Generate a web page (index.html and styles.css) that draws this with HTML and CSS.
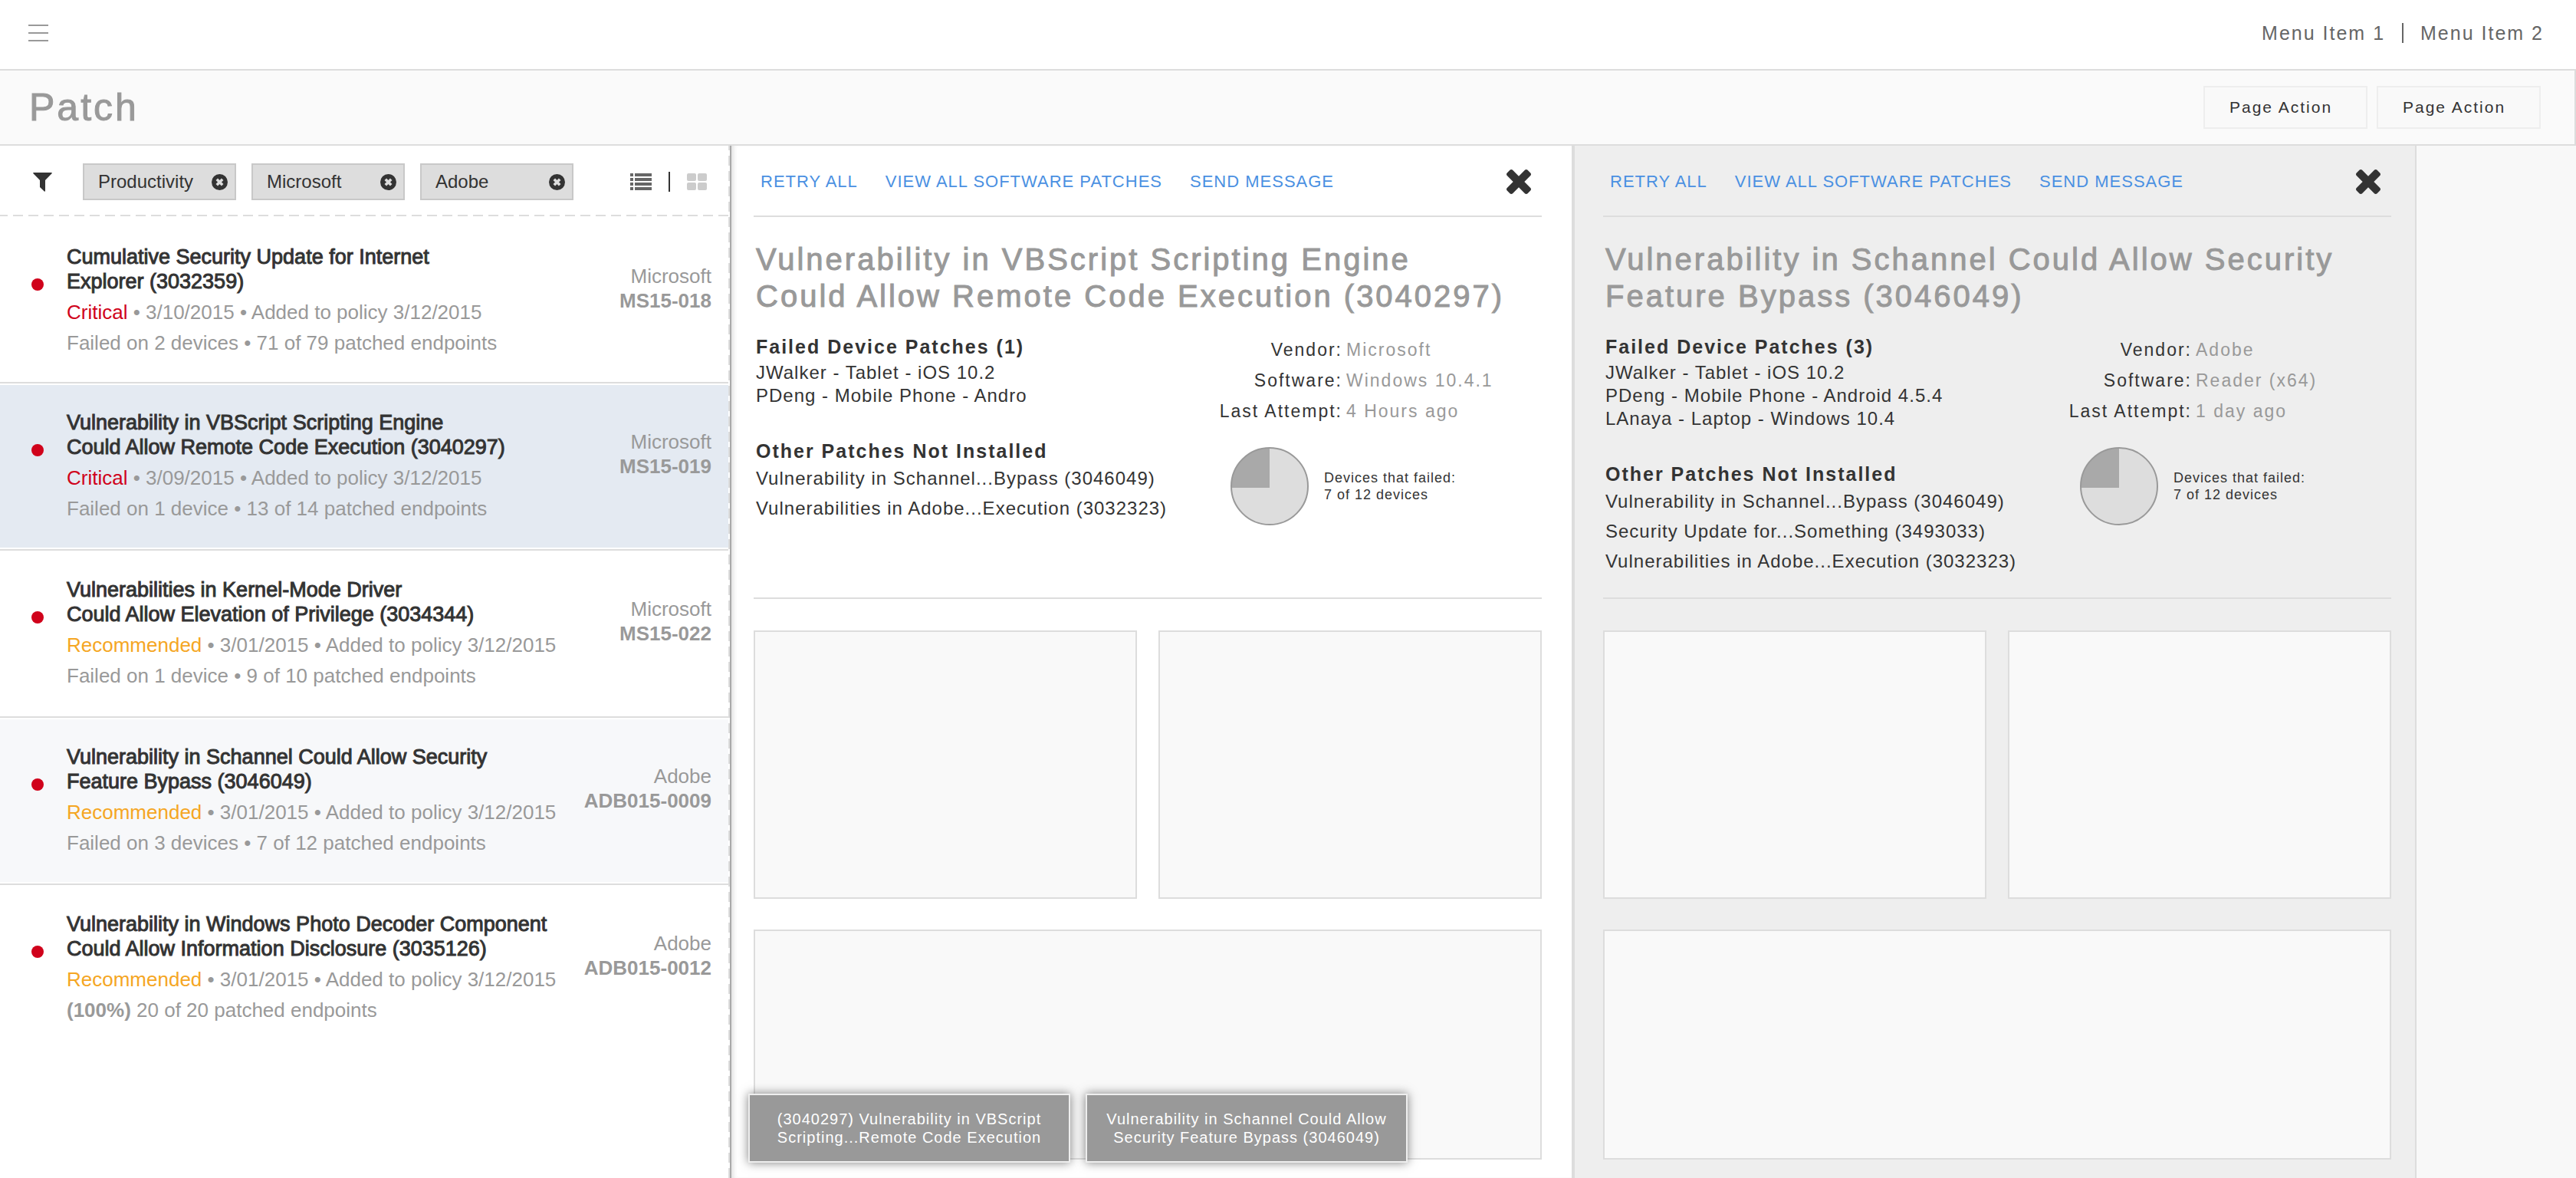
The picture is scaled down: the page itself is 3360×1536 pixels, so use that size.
FILE: index.html
```html
<!DOCTYPE html>
<html lang="en">
<head>
<meta charset="utf-8">
<meta name="viewport" content="width=device-width, initial-scale=1">
<title>Patch</title>
<link rel="stylesheet" href="styles.css">
</head>
<body>
<svg class="sprite" aria-hidden="true">
  <symbol id="icon-close" viewBox="110 366 1188 1188">
    <path d="M1298 1322q0 40-28 68l-136 136q-28 28-68 28t-68-28l-294-294-294 294q-28 28-68 28t-68-28l-136-136q-28-28-28-68t28-68l294-294-294-294q-28-28-28-68t28-68l136-136q28-28 68-28t68 28l294 294 294-294q28-28 68-28t68 28l136 136q28 28 28 68t-28 68l-294 294 294 294q28 28 28 68z"/>
  </symbol>
  <symbol id="icon-remove" viewBox="0 0 21 21">
    <circle cx="10.500" cy="10.500" r="10.500"/>
    <path d="M6.800 6.800l7.400 7.400M14.200 6.800l-7.400 7.400" fill="none" stroke="#ddd" stroke-width="3.600"/>
  </symbol>
  <symbol id="icon-pie" viewBox="0 0 102 102">
    <circle cx="51" cy="51" r="50" fill="#ddd"/>
    <path d="M51 53H1A50 50 0 0 1 51 1z" fill="#a9a9a9"/>
    <circle cx="51" cy="51" r="50" fill="none" stroke="#999" stroke-width="2"/>
  </symbol>
</svg>

<header class="topbar">
  <button class="icon-button" type="button" aria-label="Open menu">
    <svg width="26" height="22" viewBox="0 0 26 22" fill="#999"><path d="M0 0h26v2H0zM0 10h26v2H0zM0 20h26v2H0z"/></svg>
  </button>
  <nav class="menu">
    <a href="#">Menu Item 1</a>
    <span class="menu-divider"></span>
    <a href="#">Menu Item 2</a>
  </nav>
</header>

<div class="titlebar">
  <h1>Patch</h1>
  <div class="page-actions">
    <button class="page-action" type="button">Page Action</button>
    <button class="page-action" type="button">Page Action</button>
  </div>
</div>

<main class="workspace">
  <aside class="sidebar">
    <div class="filters">
      <svg class="funnel" width="25" height="25" viewBox="0 0 25 25" fill="#333"><path d="M1 0h23q1 0 .8 1L16 10v14q0 1-1 .8L9 19v-9L.2 1Q0 0 1 0z"/></svg>
      <div class="chips">
        <button class="chip" type="button">Productivity<svg width="21" height="21"><use href="#icon-remove"/></svg></button>
        <button class="chip" type="button">Microsoft<svg width="21" height="21"><use href="#icon-remove"/></svg></button>
        <button class="chip" type="button">Adobe<svg width="21" height="21"><use href="#icon-remove"/></svg></button>
      </div>
      <div class="views">
        <button class="icon-button" type="button" aria-label="List view">
          <svg width="28" height="22" viewBox="0 0 28 22" fill="#666"><path d="M0 0h4v4H0zM6 0h22v4H6zM0 6h4v4H0zM6 6h22v4H6zM0 12h4v4H0zM6 12h22v4H6zM0 18h4v4H0zM6 18h22v4H6z"/></svg>
        </button>
        <span class="views-divider"></span>
        <button class="icon-button" type="button" aria-label="Grid view">
          <svg width="26" height="22" viewBox="0 0 26 22" fill="#ccc"><rect width="12" height="10" rx="2"/><rect x="14" width="12" height="10" rx="2"/><rect y="12" width="12" height="10" rx="2"/><rect x="14" y="12" width="12" height="10" rx="2"/></svg>
        </button>
      </div>
    </div>
    <ul class="patches">
      <li>
        <article class="patch">
          <span class="dot"></span>
          <div class="patch-body">
            <h2>Cumulative Security Update for Internet<br>Explorer (3032359)</h2>
            <p><span class="critical">Critical</span> • 3/10/2015 • Added to policy 3/12/2015</p>
            <p>Failed on 2 devices • 71 of 79 patched endpoints</p>
          </div>
          <p class="vendor">Microsoft<br><b>MS15-018</b></p>
        </article>
      </li>
      <li>
        <article class="patch selected">
          <span class="dot"></span>
          <div class="patch-body">
            <h2>Vulnerability in VBScript Scripting Engine<br>Could Allow Remote Code Execution (3040297)</h2>
            <p><span class="critical">Critical</span> • 3/09/2015 • Added to policy 3/12/2015</p>
            <p>Failed on 1 device • 13 of 14 patched endpoints</p>
          </div>
          <p class="vendor">Microsoft<br><b>MS15-019</b></p>
        </article>
      </li>
      <li>
        <article class="patch">
          <span class="dot"></span>
          <div class="patch-body">
            <h2>Vulnerabilities in Kernel-Mode Driver<br>Could Allow Elevation of Privilege (3034344)</h2>
            <p><span class="recommended">Recommended</span> • 3/01/2015 • Added to policy 3/12/2015</p>
            <p>Failed on 1 device • 9 of 10 patched endpoints</p>
          </div>
          <p class="vendor">Microsoft<br><b>MS15-022</b></p>
        </article>
      </li>
      <li>
        <article class="patch opened">
          <span class="dot"></span>
          <div class="patch-body">
            <h2>Vulnerability in Schannel Could Allow Security<br>Feature Bypass (3046049)</h2>
            <p><span class="recommended">Recommended</span> • 3/01/2015 • Added to policy 3/12/2015</p>
            <p>Failed on 3 devices • 7 of 12 patched endpoints</p>
          </div>
          <p class="vendor">Adobe<br><b>ADB015-0009</b></p>
        </article>
      </li>
      <li>
        <article class="patch">
          <span class="dot"></span>
          <div class="patch-body">
            <h2>Vulnerability in Windows Photo Decoder Component<br>Could Allow Information Disclosure (3035126)</h2>
            <p><span class="recommended">Recommended</span> • 3/01/2015 • Added to policy 3/12/2015</p>
            <p><b>(100%)</b> 20 of 20 patched endpoints</p>
          </div>
          <p class="vendor">Adobe<br><b>ADB015-0012</b></p>
        </article>
      </li>
    </ul>
  </aside>

  <section class="panel panel-front">
    <div class="panel-bar">
      <a href="#">RETRY ALL</a>
      <a href="#">VIEW ALL SOFTWARE PATCHES</a>
      <a href="#">SEND MESSAGE</a>
      <button class="icon-button close" type="button" aria-label="Close"><svg width="32" height="32" fill="#333"><use href="#icon-close"/></svg></button>
    </div>
    <h2 class="panel-title">Vulnerability in VBScript Scripting Engine<br>Could Allow Remote Code Execution (3040297)</h2>
    <div class="summary">
      <div class="summary-lists">
        <h3>Failed Device Patches (1)</h3>
        <ul class="devices">
          <li>JWalker - Tablet - iOS 10.2</li>
          <li>PDeng - Mobile Phone - Andro</li>
        </ul>
        <h3>Other Patches Not Installed</h3>
        <ul class="others">
          <li>Vulnerability in Schannel...Bypass (3046049)</li>
          <li>Vulnerabilities in Adobe...Execution (3032323)</li>
        </ul>
      </div>
      <div class="summary-facts">
        <dl>
          <dt>Vendor:</dt><dd>Microsoft</dd>
          <dt>Software:</dt><dd>Windows 10.4.1</dd>
          <dt>Last Attempt:</dt><dd>4 Hours ago</dd>
        </dl>
        <div class="failed">
          <svg width="102" height="102"><use href="#icon-pie"/></svg>
          <p>Devices that failed:<br>7 of 12 devices</p>
        </div>
      </div>
    </div>
    <div class="cards">
      <div class="card"></div>
      <div class="card"></div>
      <div class="card card-wide"></div>
    </div>
    <div class="toasts">
      <button class="toast" type="button">(3040297) Vulnerability in VBScript<br>Scripting...Remote Code Execution</button>
      <button class="toast" type="button">Vulnerability in Schannel Could Allow<br>Security Feature Bypass (3046049)</button>
    </div>
  </section>

  <section class="panel panel-back">
    <div class="panel-bar">
      <a href="#">RETRY ALL</a>
      <a href="#">VIEW ALL SOFTWARE PATCHES</a>
      <a href="#">SEND MESSAGE</a>
      <button class="icon-button close" type="button" aria-label="Close"><svg width="32" height="32" fill="#333"><use href="#icon-close"/></svg></button>
    </div>
    <h2 class="panel-title">Vulnerability in Schannel Could Allow Security<br>Feature Bypass (3046049)</h2>
    <div class="summary">
      <div class="summary-lists">
        <h3>Failed Device Patches (3)</h3>
        <ul class="devices">
          <li>JWalker - Tablet - iOS 10.2</li>
          <li>PDeng - Mobile Phone - Android 4.5.4</li>
          <li>LAnaya - Laptop - Windows 10.4</li>
        </ul>
        <h3>Other Patches Not Installed</h3>
        <ul class="others">
          <li>Vulnerability in Schannel...Bypass (3046049)</li>
          <li>Security Update for...Something (3493033)</li>
          <li>Vulnerabilities in Adobe...Execution (3032323)</li>
        </ul>
      </div>
      <div class="summary-facts">
        <dl>
          <dt>Vendor:</dt><dd>Adobe</dd>
          <dt>Software:</dt><dd>Reader (x64)</dd>
          <dt>Last Attempt:</dt><dd>1 day ago</dd>
        </dl>
        <div class="failed">
          <svg width="102" height="102"><use href="#icon-pie"/></svg>
          <p>Devices that failed:<br>7 of 12 devices</p>
        </div>
      </div>
    </div>
    <div class="cards">
      <div class="card"></div>
      <div class="card"></div>
      <div class="card card-wide"></div>
    </div>
  </section>
</main>
</body>
</html>
```
FILE: styles.css
```css
* {
  box-sizing: border-box;
}

body {
  display: flex;
  flex-direction: column;
  min-height: 100vh;
  margin: 0;
  background: #fff;
  color: #333;
  font-family: "Liberation Sans", Arial, Helvetica, sans-serif;
  font-size: 24px;
}

h1, h2, h3, p, ul, dl, dd {
  margin: 0;
  padding: 0;
}

ul {
  list-style: none;
}

a {
  color: inherit;
  text-decoration: none;
}

button {
  color: inherit;
  font: inherit;
  cursor: pointer;
}

svg {
  display: block;
  flex: none;
}

.sprite {
  position: absolute;
  width: 0;
  height: 0;
}

.icon-button {
  padding: 0;
  border: 0;
  background: none;
}

/* Top bar */

.topbar {
  display: flex;
  align-items: center;
  justify-content: space-between;
  height: 92px;
  padding: 0 42px 4px 37px;
  border-bottom: 2px solid #ddd;
}

.menu {
  display: flex;
  align-items: center;
  gap: 22px;
  color: #666;
  font-size: 25px;
  letter-spacing: 2px;
}

.menu-divider {
  width: 2px;
  height: 26px;
  background: #666;
}

/* Title bar */

.titlebar {
  display: flex;
  align-items: center;
  justify-content: space-between;
  height: 98px;
  padding: 0 44px 0 38px;
  border-right: 2px solid #ddd;
  border-bottom: 2px solid #ddd;
  background: #fafafa;
}

.titlebar h1 {
  color: #999;
  font-size: 50px;
  font-weight: 400;
  letter-spacing: 3px;
  -webkit-text-stroke: 1px #999;
}

.page-actions {
  display: flex;
  gap: 12px;
}

.page-action {
  width: 214px;
  height: 56px;
  padding: 0 32px;
  border: 2px solid #eee;
  background: #f9f9f9;
  font-size: 21px;
  letter-spacing: 2px;
  text-align: left;
}

/* Columns */

.workspace {
  display: grid;
  flex: 1;
  grid-template-columns: minmax(0, 952fr) minmax(0, 1098fr) minmax(0, 1102fr) minmax(0, 208fr);
  background: #f8f8f8;
}

/* Sidebar */

.sidebar {
  padding-right: 2px;
  background: repeating-linear-gradient(#ddd 0 13px, #fff 13px 20px) right -7px / 2px 110% no-repeat #fff;
}

.filters {
  display: flex;
  align-items: center;
  height: 92px;
  padding: 2px 28px 0 43px;
  background: repeating-linear-gradient(90deg, #ddd 0 13px, #fff 13px 20px) -3px bottom / 110% 2px no-repeat;
}

.chips {
  display: flex;
  gap: 20px;
  margin-left: 40px;
}

.chip {
  display: flex;
  align-items: center;
  justify-content: space-between;
  width: 200px;
  height: 48px;
  padding: 0 9px 0 18px;
  border: 2px solid #c8c8c8;
  background: #ddd;
}

.chip svg {
  fill: #333;
}

.views {
  display: flex;
  align-items: center;
  gap: 22px;
  margin-left: auto;
}

.views-divider {
  width: 2px;
  height: 26px;
  background: #333;
}

.patches li {
  padding: 2px 0;
  border-bottom: 2px solid #ddd;
}

.patches li:last-child {
  border-bottom: 0;
}

.patches li:first-child {
  padding: 4px 0 0;
}

.patch {
  display: flex;
  align-items: flex-start;
  padding: 33px 22px 31px 41px;
  color: #999;
  font-size: 26px;
  line-height: 40px;
  white-space: nowrap;
}

.selected {
  background: #e4eaf2;
}

.opened {
  background: #f7f8fa;
}

.dot {
  width: 16px;
  height: 16px;
  margin: 44px 30px 0 0;
  border-radius: 50%;
  background: #d0021b;
}

.patch h2 {
  margin-bottom: 4px;
  color: #333;
  font-size: 27px;
  font-weight: 400;
  line-height: 32px;
  -webkit-text-stroke: 1px #333;
}

.critical {
  color: #d0021b;
}

.recommended {
  color: #f5a623;
}

.vendor {
  margin: 25px 0 0 auto;
  line-height: 32px;
  text-align: right;
}

/* Detail panels */

.panel {
  position: relative;
}

.panel-front {
  padding: 0 39px 24px 29px;
  border-left: 2px solid #a9a9a9;
  background: #fff;
  box-shadow: inset 6px 0 6px -4px rgba(0, 0, 0, 0.15);
}

.panel-back {
  padding: 0 31px 24px 37px;
  border-right: 2px solid #ddd;
  border-left: 4px solid #ddd;
  background: #eee;
}

.panel-bar {
  display: flex;
  align-items: center;
  gap: 36px;
  height: 93px;
  padding: 3px 14px 0 9px;
  border-bottom: 2px solid #ddd;
  color: #4a90e2;
  font-size: 22px;
  letter-spacing: 1px;
  white-space: nowrap;
}

.close {
  margin-left: auto;
}

.panel-title {
  margin: 31px 0 0 3px;
  color: #999;
  font-size: 40px;
  font-weight: 400;
  line-height: 48px;
  letter-spacing: 3px;
  white-space: nowrap;
  -webkit-text-stroke: 1px #999;
}

.summary {
  display: grid;
  grid-template-columns: minmax(0, 600fr) minmax(0, 428fr);
  min-height: 371px;
  padding-top: 26px;
  border-bottom: 2px solid #ddd;
  white-space: nowrap;
}

.summary-lists {
  padding-left: 3px;
  letter-spacing: 1px;
}

.summary-lists h3 {
  font-size: 25px;
  line-height: 32px;
  letter-spacing: 2px;
}

.devices {
  margin: 3px 0 41px;
  line-height: 30px;
}

.others {
  line-height: 39px;
}

.summary dl {
  display: grid;
  grid-template-columns: 168px auto;
  column-gap: 5px;
  font-size: 23px;
  line-height: 40px;
  letter-spacing: 2px;
}

.summary dt {
  text-align: right;
}

.summary dd {
  color: #999;
}

.failed {
  display: flex;
  align-items: center;
  gap: 20px;
  margin: 27px 0 0 22px;
  font-size: 18px;
  line-height: 22px;
  letter-spacing: 1px;
}

.cards {
  display: grid;
  grid-template-columns: 1fr 1fr;
  grid-template-rows: 350px 300px;
  gap: 40px 28px;
  margin-top: 41px;
}

.card {
  border: 2px solid #ddd;
  background: #f9f9f9;
}

.card-wide {
  grid-column: 1 / -1;
}

/* Minimised panels float over the front panel */

.toasts {
  position: absolute;
  bottom: 20px;
  left: 22px;
  display: flex;
  gap: 20px;
}

.toast {
  width: 420px;
  height: 90px;
  padding: 0;
  border: 2px solid #eee;
  background: #999;
  box-shadow: 0 0 12px rgba(0, 0, 0, 0.5);
  color: #fff;
  font-size: 20px;
  line-height: 24px;
  letter-spacing: 1px;
  white-space: nowrap;
}
```
